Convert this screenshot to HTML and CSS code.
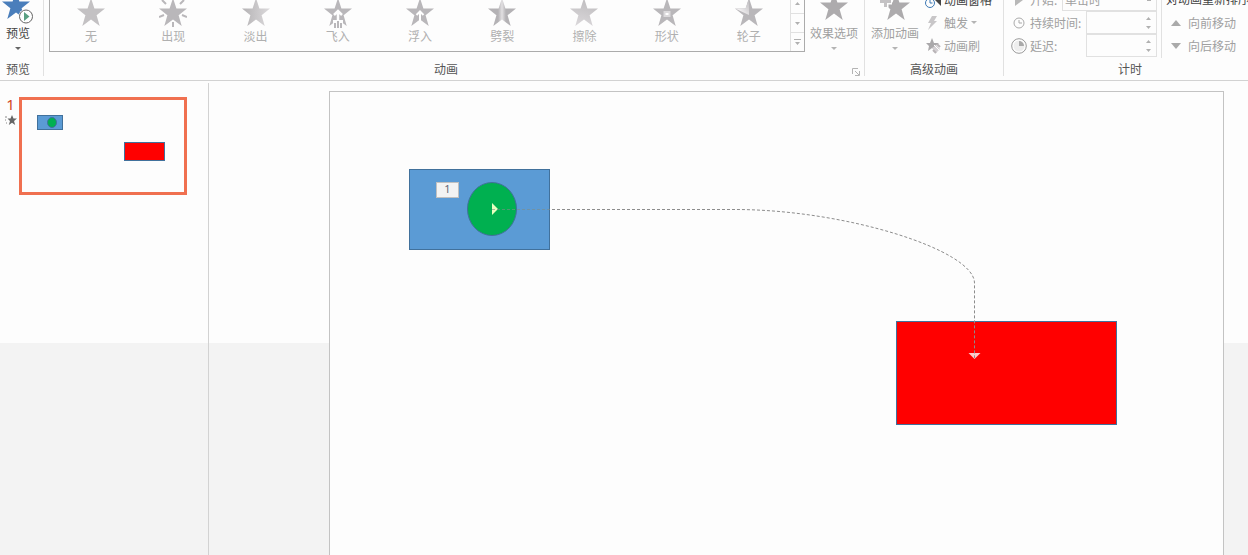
FILE: index.html
```html
<!DOCTYPE html>
<html lang="zh-CN">
<head>
<meta charset="utf-8">
<title>动画</title>
<link rel="stylesheet" href="styles.css">
</head>
<body>
<svg class="defs" aria-hidden="true">
  <defs>
    <path id="star" d="M14 -1 17.4 9.500H28L19.600 16.200 22.700 27 14 20.600 5.300 27 8.400 16.200 0 9.500H10.600Z"/>
    <linearGradient id="fade"><stop offset="0" stop-color="#b4b2b4"/><stop offset="1" stop-color="#dcdadc"/></linearGradient>
    <linearGradient id="split"><stop offset="0" stop-color="#b4b2b5"/><stop offset=".36" stop-color="#b4b2b5"/><stop offset=".5" stop-color="#e2e0e2"/><stop offset=".64" stop-color="#b4b2b5"/><stop offset="1" stop-color="#b4b2b5"/></linearGradient>
    <linearGradient id="wipe" x1="0" y1="1" x2=".3" y2="0"><stop offset="0" stop-color="#dddadd"/><stop offset="1" stop-color="#c0bec0"/></linearGradient>
    <linearGradient id="wheel" x1="1" y1="0" x2="0" y2="1"><stop offset="0" stop-color="#b9b7ba"/><stop offset=".7" stop-color="#efedef"/></linearGradient>
  </defs>
</svg>

<header class="ribbon">
  <section class="group preview">
    <div class="body">
      <button class="large dark">
        <svg width="32" height="32" viewBox="0 0 32 32"><use href="#star" x="0" y="-1" fill="#4a7ebb"/><circle cx="24" cy="23.500" r="7.500" fill="#fdfdfd"/><circle cx="24" cy="23.500" r="6.500" fill="#fff" stroke="#666"/><path d="M22 19v9l5.500-4.500z" fill="#5aa082"/></svg>
        <span>预览</span><i class="caret"></i>
      </button>
    </div>
    <h2>预览</h2>
  </section>

  <section class="group wide">
    <div class="body row">
      <div class="gallery">
        <div class="effects">
          <button class="effect"><svg width="28" height="28"><use href="#star" fill="#c3c1c3"/></svg>无</button>
          <button class="effect"><svg width="28" height="28"><use href="#star" fill="#b9b7ba"/><path d="M2 0l6 6M26 0l-6 6M0 19l6-3M28 19l-6-3M14 22v6" stroke="#fdfdfd" stroke-width="4"/><path d="M3 1l4 4M25 1l-4 4M0 18l5-2M28 18l-5-2M14 23v5" stroke="#b9b7ba" stroke-width="2"/></svg>出现</button>
          <button class="effect"><svg width="28" height="28"><use href="#star" fill="url(#fade)"/></svg>淡出</button>
          <button class="effect"><svg class="spill" width="28" height="28"><use href="#star" fill="#b9b7ba"/><path d="M10 16l4-4 4 4M14 12v10" stroke="#fdfdfd" stroke-width="2.500" fill="none"/><path d="M9 21h10v8H9z" fill="#fdfdfd"/><path d="M11 24v5M14 22v7M17 24v5" stroke="#b9b7ba" stroke-width="2"/></svg>飞入</button>
          <button class="effect"><svg width="28" height="28"><use href="#star" fill="#b9b7ba"/><path d="M10.500 16l3.500-3.500 3.500 3.500M14 13v9" stroke="#fff" stroke-width="2" fill="none"/></svg>浮入</button>
          <button class="effect"><svg width="28" height="28"><use href="#star" fill="url(#split)"/></svg>劈裂</button>
          <button class="effect"><svg width="28" height="28"><use href="#star" fill="url(#wipe)"/></svg>擦除</button>
          <button class="effect"><svg width="28" height="28"><use href="#star" fill="#b9b7ba"/><path d="M11.500 13h5v4h-5z" fill="#fff" stroke="#dcdadc" stroke-width="2"/></svg>形状</button>
          <button class="effect"><svg width="28" height="28"><use href="#star" fill="#b9b7ba"/><path d="M14 -1V16L1 10V9.500h9.600z" fill="url(#wheel)"/></svg>轮子</button>
        </div>
        <div class="scroll">
          <button aria-label="向上"><svg width="5" height="3"><path d="M0 3h5L2.500 0z"/></svg></button>
          <button aria-label="向下"><svg width="5" height="3"><path d="M0 0h5L2.500 3z"/></svg></button>
          <button aria-label="其他"><svg width="7" height="6"><path d="M0 0h7v1H0zM1 3h5L3.500 6z"/></svg></button>
        </div>
      </div>
      <button class="large">
        <svg width="32" height="32" viewBox="0 0 32 32"><use href="#star" x="2" y="0" fill="#adabad"/></svg>
        <span>效果选项</span><i class="caret"></i>
      </button>
    </div>
    <h2>动画</h2>
    <button class="launcher" aria-label="动画设置"><svg width="8" height="8"><path d="M.5 6V.5H6M3 3l4 4M7.500 3v4.500H3" fill="none" stroke="#b4b4b4"/></svg></button>
  </section>

  <section class="group">
    <div class="body row advanced">
      <button class="large">
        <svg width="32" height="32" viewBox="0 0 32 32"><use href="#star" x="3" y="0" fill="#adabad"/><path d="M6.500 2v13M0 8.500h13" stroke="#fdfdfd" stroke-width="6"/><path d="M6.500 2v12M1 8.500h11" stroke="#c4c2c4" stroke-width="3"/></svg>
        <span>添加动画</span><i class="caret"></i>
      </button>
      <div class="stack">
        <button class="small dark"><svg width="16" height="16"><path d="M16 2v12l-6-6z" fill="#444"/><circle cx="5" cy="11" r="4.500" fill="#fdfdfd" stroke="#3c78b4"/><path d="M5 8v3h2.500" fill="none" stroke="#3c78b4"/></svg>动画窗格</button>
        <button class="small"><svg width="16" height="16"><path d="M7 1h5L9 6h3L3 15l3-7H3z" fill="#c8c6c8"/></svg>触发<i class="caret"></i></button>
        <button class="small"><svg width="16" height="16"><path d="M7 0l2 5h5l-4 3 1 4-4-2-4 3 1-5-3-3h4z" fill="#aaa8aa"/><path d="M7 10l4-3 4 4-4 4z" fill="#d4d0d3"/><path d="M9 7l6 6" stroke="#fff"/><path d="M12 6l3 3M8 12l3 3" stroke="#b9b4b7" stroke-width="2"/></svg>动画刷</button>
      </div>
    </div>
    <h2>高级动画</h2>
  </section>

  <section class="group timing">
    <div class="body row">
      <div class="stack fields">
        <div class="field"><svg width="16" height="16"><path d="M4 2v12l8-6z" fill="#b8b8b8"/></svg><label for="start">开始:</label><select id="start"><option>单击时</option></select></div>
        <div class="field"><svg width="16" height="16"><circle cx="8" cy="8" r="5" fill="none" stroke="#aaa"/><path d="M8 5v3h3" fill="none" stroke="#aaa"/></svg><label for="dur">持续时间:</label><span class="spin"><input id="dur" type="text"><span class="arrows"><svg width="5" height="3"><path d="M0 3h5L2.500 0z"/></svg><svg width="5" height="3"><path d="M0 0h5L2.500 3z"/></svg></span></span></div>
        <div class="field"><svg width="16" height="16"><circle cx="8" cy="8" r="7.300" fill="#fff" stroke="#999"/><circle cx="8" cy="8" r="5.500" fill="#eee"/><path d="M8 3a5 5 0 0 1 5 5H8z" fill="#aaa"/></svg><label for="delay">延迟:</label><span class="spin"><input id="delay" type="text"><span class="arrows"><svg width="5" height="3"><path d="M0 3h5L2.500 0z"/></svg><svg width="5" height="3"><path d="M0 0h5L2.500 3z"/></svg></span></span></div>
      </div>
      <div class="stack order">
        <strong class="title">对动画重新排序</strong>
        <button class="small"><svg width="10" height="6"><path d="M0 6h10L5 0z" fill="#aaa"/></svg>向前移动</button>
        <button class="small"><svg width="10" height="6"><path d="M0 0h10L5 6z" fill="#aaa"/></svg>向后移动</button>
      </div>
    </div>
    <h2>计时</h2>
  </section>
</header>

<main class="workspace">
  <aside class="thumbs">
    <div class="index"><span>1</span><svg width="12" height="10"><path d="M7 0l1.500 3.500H12L9 6l1.200 4L7 7.800 3.800 10 5 6 2.500 3.500h3z" fill="#666"/><path d="M0 2h2M0 5h1M1 8h1" stroke="#888"/></svg></div>
    <button class="thumb" aria-label="幻灯片 1">
      <svg viewBox="0 0 162 92"><rect x="15.500" y="15.500" width="25" height="14" fill="#5b9bd5" stroke="#41719c"/><ellipse cx="30" cy="22.500" rx="4.500" ry="5" fill="#00b050" stroke="#41719c"/><rect x="102.500" y="42.500" width="40" height="18" fill="red" stroke="#41719c"/></svg>
    </button>
  </aside>
  <section class="stage">
    <div class="slide">
      <svg class="drawing" width="893" height="463">
        <rect x="79.500" y="77.500" width="140" height="80" fill="#5b9bd5" stroke="#41719c"/>
        <ellipse cx="162" cy="117" rx="24.500" ry="26.500" fill="#00b050" stroke="#41719c"/>
        <rect x="106.500" y="90.500" width="22" height="15" fill="#f3f3f3" stroke="#c0c0c0"/>
        <text x="117.500" y="101" class="tag">1</text>
        <rect x="566.500" y="229.500" width="220" height="103" fill="red" stroke="#41719c"/>
        <path d="M162 111v12l6-6z" fill="#e8ffc0"/>
        <path d="M638.500 261h12l-6 6z" fill="#ffc8c8"/>
        <path d="M162 117.500H222" fill="none" stroke="#7f8c85" stroke-opacity=".6" stroke-dasharray="3 2"/>
        <path d="M222 117.500H405C515 117.500 644.500 158 644.500 191V266" fill="none" stroke="#8c8c8c" stroke-dasharray="3 2"/>
      </svg>
    </div>
  </section>
</main>
</body>
</html>
```
FILE: styles.css
```css
* { box-sizing: border-box; }
body {
  margin: 0;
  height: 100vh;
  display: flex;
  flex-direction: column;
  overflow: hidden;
  background: #fdfdfd;
  color: #555;
  font: 12px/16px "Noto Sans CJK SC", sans-serif;
}
button, input, select { font: inherit; color: inherit; }
button { border: 0; padding: 0; background: none; }
svg { display: block; flex: none; }
.defs { position: absolute; width: 0; height: 0; }

.ribbon {
  display: flex;
  flex: none;
  padding-bottom: 4px;
  border-bottom: 1px solid #d2d2d2;
  overflow: hidden;
}
.group { position: relative; flex: none; border-right: 1px solid #e1e1e1; }
.preview { padding-right: 7px; }
.wide { flex: 1; padding: 0 6px 0 5px; }
.body { height: 58px; display: flex; flex-direction: column; justify-content: flex-end; overflow: hidden; }
.row { flex-direction: row; align-items: flex-end; justify-content: flex-start; }
.group h2 { margin: 0; height: 18px; font-size: 12px; line-height: 22px; font-weight: 400; text-align: center; }
.wide h2 { padding-right: 15px; }

.large { display: flex; flex-direction: column; align-items: center; flex: none; color: #a0a0a0; }
.large span { white-space: nowrap; }
.large .caret { margin: 6px 0 8px; }
.caret { border: 3px solid transparent; border-top-color: #b4b4b4; border-bottom: 0; }
.dark, .small.dark { color: #444; }
.dark .caret { border-top-color: #666; }
.preview .large { width: 36px; }

.gallery { flex: 1; display: flex; margin-right: 5px; border: 1px solid #ababab; border-top: 0; height: 52px; margin-bottom: 6px; }
.effects { flex: 1; display: flex; align-items: flex-end; }
.effect { flex: 1; display: flex; flex-direction: column; align-items: center; gap: 1px; padding-bottom: 7px; color: #b0b0b0; }
.spill { overflow: visible; }
.scroll { width: 14px; display: flex; flex-direction: column; border-left: 1px solid #e1e1e1; fill: #b0b0b0; }
.scroll button { flex: 1; display: grid; place-items: center; border-top: 1px solid #e1e1e1; }
.scroll button:first-child { flex: none; height: 13px; padding-bottom: 6px; border: 0; }
.launcher { position: absolute; right: 4px; bottom: 0; }

.advanced { padding: 0 11px 0 6px; gap: 6px; }
.stack { display: flex; flex-direction: column; flex: none; padding-bottom: 1px; }
.small { height: 23px; display: flex; align-items: center; gap: 4px; color: #a0a0a0; white-space: nowrap; }
.advanced .small { gap: 3px; }

.timing { width: 252px; margin-right: -8px; border: 0; }
.fields { width: 153px; padding-left: 7px; }
.field { height: 23px; display: flex; align-items: center; gap: 3px; color: #a0a0a0; }
.field label { flex: 1; white-space: nowrap; }
.field select {
  appearance: none;
  width: 95px;
  height: 22px;
  padding: 0 2px;
  border: 1px solid #e1e1e1;
  border-radius: 0;
  background: conic-gradient(from 315deg at 50% 100%, #b0b0b0 90deg, transparent 0) right 4px center / 6px 3px no-repeat;
  background: linear-gradient(#b0b0b0, #b0b0b0) right 5px center / 4px 2px no-repeat;
  color: #a0a0a0;
}
.spin { width: 71px; height: 23px; display: flex; border: 1px solid #e1e1e1; }
.spin input { flex: 1; min-width: 0; border: 0; padding: 0; background: none; }
.arrows { display: flex; flex-direction: column; justify-content: space-between; padding: 5px 5px 4px; fill: #b0b0b0; }
.order { margin-left: 4px; padding-left: 4px; border-left: 1px solid #e1e1e1; }
.order .small { gap: 7px; padding-left: 5px; }
.title { height: 23px; line-height: 21px; font-weight: 400; color: #444; white-space: nowrap; }

.workspace {
  flex: 1;
  min-height: 0;
  display: flex;
  background: linear-gradient(#fdfdfd 262px, #f3f3f3 262px);
}
.thumbs { width: 209px; flex: none; display: flex; align-items: flex-start; margin-top: 2px; padding: 14px 0 0 4px; border-right: 1px solid #d2d2d2; }
.index { width: 15px; padding-right: 2px; display: flex; flex-direction: column; align-items: center; gap: 4px; color: #d24726; font: 15px/14px "Noto Sans", sans-serif; }
.thumb { width: 168px; border: 3px solid #f07050; background: #fdfdfd; }
.stage { flex: 1; min-width: 0; padding: 10px 24px 0 120px; }
.slide { height: 100%; border: 1px solid #c3c3c3; border-bottom: 0; background: #fdfdfd; overflow: hidden; }
.tag { font: 11px "Noto Sans", sans-serif; fill: #667; text-anchor: middle; }
```
